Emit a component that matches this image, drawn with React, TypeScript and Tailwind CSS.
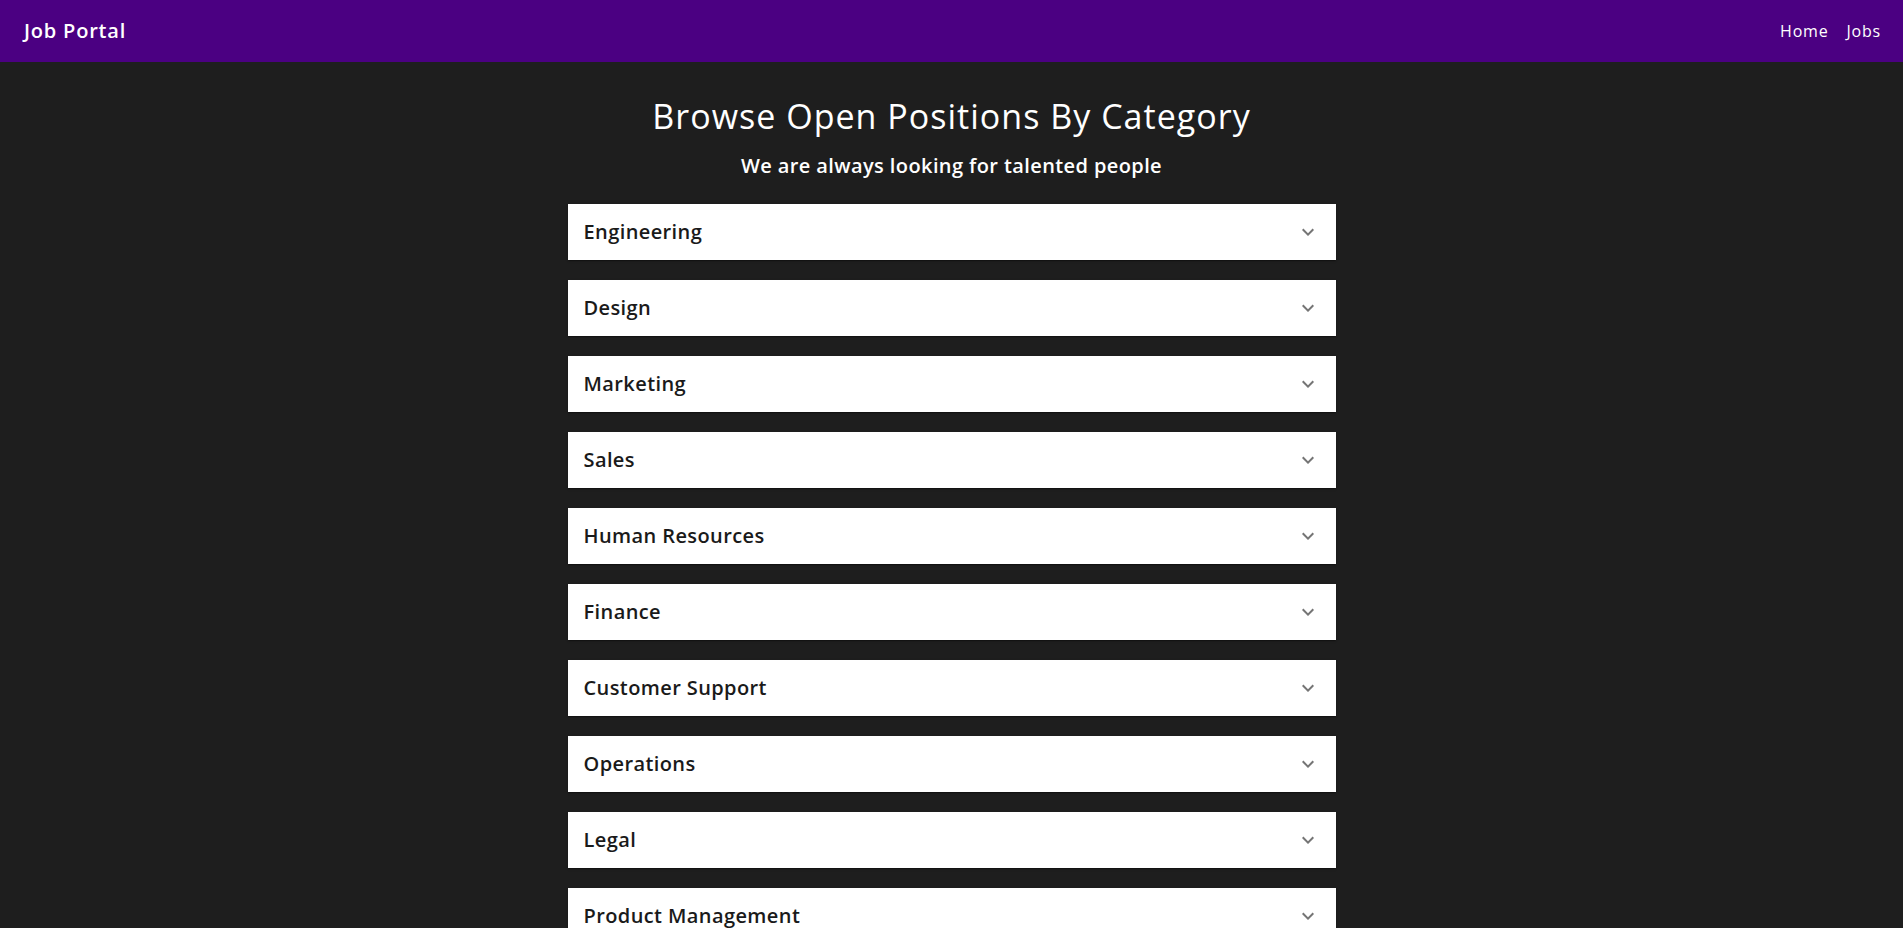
const categories = [
  "Engineering",
  "Design",
  "Marketing",
  "Sales",
  "Human Resources",
  "Finance",
  "Customer Support",
  "Operations",
  "Legal",
  "Product Management",
];

function ExpandIcon() {
  return (
    <svg viewBox="0 0 24 24" className="h-6 w-6 fill-[#757575]" aria-hidden="true">
      <path d="M16.59 8.59 12 13.17 7.41 8.59 6 10l6 6 6-6z" />
    </svg>
  );
}

export default function App() {
  return (
    <div className="min-h-screen bg-[#1e1e1e] font-['Open_Sans',sans-serif] text-white">
      {/* App bar */}
      <header className="flex h-[62px] items-center justify-between bg-[#4b0082] pl-6 pr-[22px]">
        <span className="text-[20px] font-semibold tracking-[0.04em]">Job Portal</span>
        <nav className="flex items-center gap-[18px] text-[16px] tracking-[0.05em]">
          <a href="#">Home</a>
          <a href="#">Jobs</a>
        </nav>
      </header>

      <main className="mx-auto flex max-w-3xl flex-col items-center pt-[33px] pb-10">
        <h1 className="text-[34px] leading-[42px] font-normal tracking-[0.03em]">
          Browse Open Positions By Category
        </h1>
        <p className="mt-[13px] text-[20px] leading-8 font-semibold tracking-[0.02em]">
          We are always looking for talented people
        </p>

        <div className="mt-[22px] flex w-full flex-col gap-5">
          {categories.map((name) => (
            <button
              key={name}
              className="flex h-14 w-full items-center justify-between bg-white px-4 text-left text-[#1a1a1a] shadow-[0_2px_1px_-1px_rgba(0,0,0,0.2),0_1px_1px_0_rgba(0,0,0,0.14),0_1px_3px_0_rgba(0,0,0,0.12)]"
            >
              <span className="text-[20px] font-semibold tracking-[0.02em]">{name}</span>
              <ExpandIcon />
            </button>
          ))}
        </div>
      </main>
    </div>
  );
}
